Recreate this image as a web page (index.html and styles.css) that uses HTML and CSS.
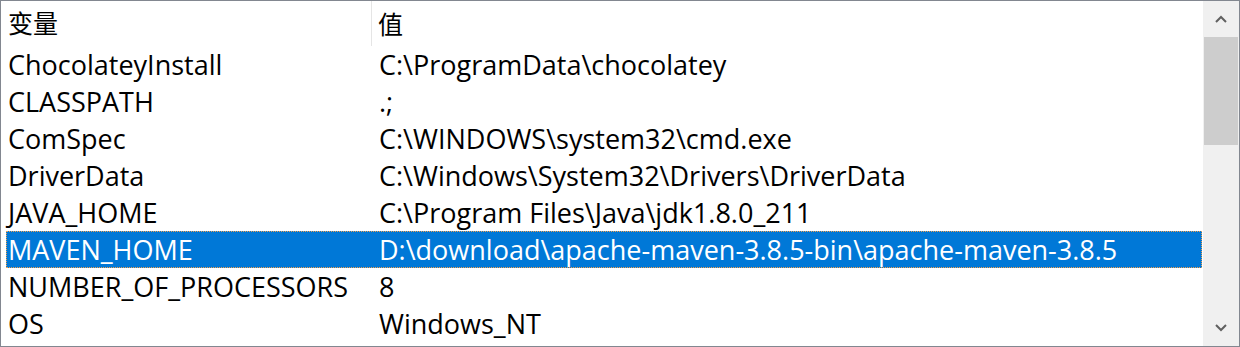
FILE: index.html
```html
<!DOCTYPE html>
<html lang="zh-CN">
<head>
    <meta charset="UTF-8">
    <title>环境变量</title>
    <link rel="stylesheet" href="styles.css">
</head>
<body>

    <div class="listview">
        <div class="list">
            <div class="header">
                <div class="col-name">变量</div>
                <div class="col-value">值</div>
            </div>
            <div class="row">
                <div class="col-name">ChocolateyInstall</div>
                <div class="col-value">C:\ProgramData\chocolatey</div>
            </div>
            <div class="row">
                <div class="col-name">CLASSPATH</div>
                <div class="col-value">.;</div>
            </div>
            <div class="row">
                <div class="col-name">ComSpec</div>
                <div class="col-value">C:\WINDOWS\system32\cmd.exe</div>
            </div>
            <div class="row">
                <div class="col-name">DriverData</div>
                <div class="col-value">C:\Windows\System32\Drivers\DriverData</div>
            </div>
            <div class="row">
                <div class="col-name">JAVA_HOME</div>
                <div class="col-value">C:\Program Files\Java\jdk1.8.0_211</div>
            </div>
            <div class="row selected">
                <div class="col-name">MAVEN_HOME</div>
                <div class="col-value">D:\download\apache-maven-3.8.5-bin\apache-maven-3.8.5</div>
            </div>
            <div class="row">
                <div class="col-name">NUMBER_OF_PROCESSORS</div>
                <div class="col-value">8</div>
            </div>
            <div class="row">
                <div class="col-name">OS</div>
                <div class="col-value">Windows_NT</div>
            </div>
        </div>

        <div class="scrollbar">
            <div class="arrow">
                <svg width="12" height="8" viewBox="0 0 12 8"><polyline points="1,7 6,2 11,7" fill="none" stroke="#606060" stroke-width="2"/></svg>
            </div>
            <div class="track">
                <div class="thumb"></div>
            </div>
            <div class="arrow">
                <svg width="12" height="8" viewBox="0 0 12 8"><polyline points="1,1 6,6 11,1" fill="none" stroke="#606060" stroke-width="2"/></svg>
            </div>
        </div>
    </div>

</body>
</html>
```

FILE: styles.css
```css
body {
    margin: 0;
    background-color: #ffffff;
    font-family: "Open Sans", "Noto Sans CJK SC", sans-serif;
}
.listview {
    display: flex;
    width: 1240px;
    height: 347px;
    box-sizing: border-box;
    border: 1px solid #828790;
    overflow: hidden;
}
.list {
    flex: 1;
    display: flex;
    flex-direction: column;
}
.header,
.row {
    display: flex;
    align-items: center;
    font-size: 27px;
    line-height: 34px;
    color: #000000;
}
.header {
    height: 45px;
    flex-shrink: 0;
    font-size: 25px;
}
.header .col-name {
    align-self: stretch;
    display: flex;
    align-items: center;
    border-right: 1px solid #e5e5e5;
    padding-bottom: 1px;
}
.row {
    height: 37px;
    flex-shrink: 0;
    margin-left: 5px;
    box-sizing: border-box;
    border: 1px solid transparent;
}
.row .col-name {
    width: 365px;
    padding-left: 1px;
}
.header .col-name {
    width: 363px;
    padding-left: 7px;
}
.col-name,
.col-value {
    white-space: nowrap;
}
.header .col-value {
    padding-left: 6px;
}
.row .col-value {
    padding-left: 6px;
}
.row.selected {
    background-color: #0078d7;
    color: #ffffff;
    border: 1px dotted #f0a050;
}
.scrollbar {
    width: 36px;
    flex-shrink: 0;
    display: flex;
    flex-direction: column;
    background-color: #f0f0f0;
    border-left: 1px solid #ffffff;
}
.arrow {
    height: 36px;
    flex-shrink: 0;
    display: flex;
    align-items: center;
    justify-content: center;
}
.track {
    flex: 1;
}
.thumb {
    height: 108px;
    margin: 0 1px;
    background-color: #cdcdcd;
}
```
